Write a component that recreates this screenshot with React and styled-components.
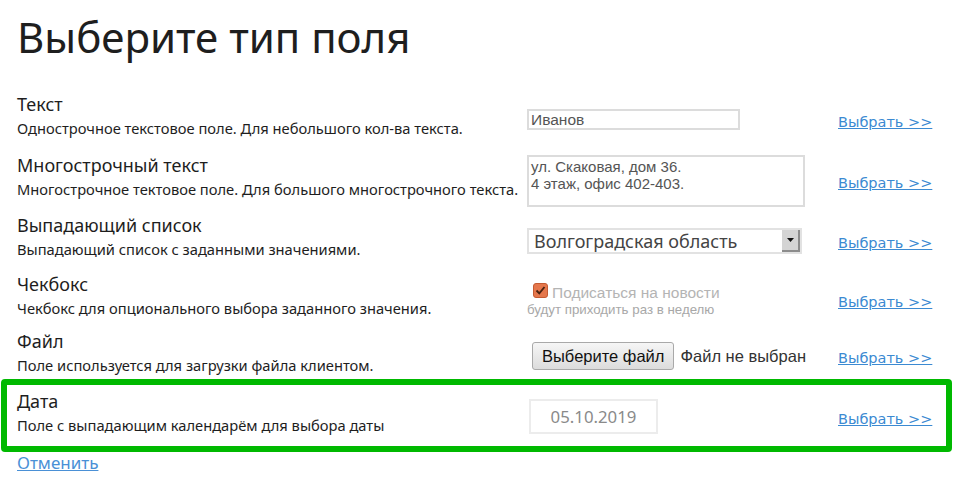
import React from 'react';
import styled, { createGlobalStyle } from 'styled-components';

const Global = createGlobalStyle`
  body {
    margin: 0;
    background: #fff;
    font-family: "Noto Sans", "Open Sans", sans-serif;
    color: #222;
  }
`;

const Page = styled.div`
  width: 963px;
  padding-top: 6px;
`;

const Title = styled.h1`
  margin: 0 0 17px 17px;
  font-size: 42px;
  font-weight: 400;
  line-height: 62px;
  color: #1e1e1e;
`;

const List = styled.div`
  display: flex;
  flex-direction: column;
  margin: 0 11px 0 1px;
`;

const Row = styled.div`
  display: grid;
  grid-template-columns: 510px 310px 1fr;
  align-items: center;
  min-height: ${(p) => p.$h || 58}px;
  padding: ${(p) => (p.$active ? '0 10px 6px' : '0 16px')};
  border: ${(p) => (p.$active ? '6px solid #00b900' : 'none')};
  border-radius: 4px;
`;

const Label = styled.div`
  display: flex;
  flex-direction: column;
`;

const Name = styled.div`
  font-size: 18px;
  line-height: 24px;
  color: #1e1e1e;
`;

const Desc = styled.div`
  margin-top: 1px;
  font-size: 14.7px;
  line-height: 22px;
  color: #1e1e1e;
`;

const Control = styled.div`
  display: flex;
  align-items: center;
  margin-top: 8px;
`;

const TextInput = styled.div`
  width: 205px;
  height: 17px;
  border: 2px solid #dcdcdc;
  padding: 0 2px;
  font-family: "Liberation Sans", Arial, sans-serif;
  font-size: 15.5px;
  line-height: 17px;
  color: #555;
`;

const TextArea = styled.div`
  width: 270px;
  height: 46px;
  border: 2px solid #dcdcdc;
  padding: 1px 2px;
  font-family: "Liberation Sans", Arial, sans-serif;
  font-size: 15px;
  line-height: 17px;
  color: #555;
  white-space: pre-line;
`;

const Select = styled.div`
  display: flex;
  align-items: center;
  justify-content: space-between;
  width: 266px;
  height: 22px;
  border: 2px solid #e2e2e2;
  padding-left: 5px;
  font-size: 18px;
  color: #444;
`;

const SelectArrow = styled.span`
  display: flex;
  align-items: center;
  justify-content: center;
  width: 18px;
  height: 22px;
  background: #d4d4d4;
  border-right: 2px solid #8c8c8c;
  border-bottom: 2px solid #8c8c8c;
  box-sizing: border-box;
`;

const Check = styled.div`
  display: flex;
  flex-direction: column;
  margin-top: 2px;
  font-family: "Liberation Sans", Arial, sans-serif;
  color: #b4b4b4;
`;

const CheckLine = styled.div`
  display: flex;
  align-items: center;
  gap: 4px;
  padding-left: 6px;
  font-size: 15.5px;
  line-height: 18px;
`;

const Box = styled.span`
  display: inline-flex;
  width: 15px;
  height: 15px;
  border-radius: 3px;
  background: #e5774c;
  border: 1px solid #c45a32;
  box-sizing: border-box;
  margin-top: -5px;
`;

const Hint = styled.div`
  font-size: 13.3px;
  line-height: 16px;
  color: #a8a8a8;
`;

const FileButton = styled.span`
  display: inline-block;
  margin-left: 5px;
  padding: 4px 9px 4px;
  border: 1px solid #a9a9a9;
  border-radius: 3px;
  background: linear-gradient(#f6f6f6, #dcdcdc);
  font-family: "Liberation Sans", Arial, sans-serif;
  font-size: 16.5px;
  line-height: 18px;
  color: #111;
`;

const FileText = styled.span`
  margin-left: 6px;
  font-family: "Liberation Sans", Arial, sans-serif;
  font-size: 16.5px;
  color: #333;
`;

const DateInput = styled.div`
  width: 125px;
  height: 31px;
  margin-left: 2px;
  border: 2px solid #ececec;
  text-align: center;
  font-size: 16.8px;
  line-height: 31px;
  color: #8a8a8a;
`;

const Link = styled.a`
  justify-self: start;
  margin-left: 1px;
  margin-top: 12px;
  font-family: "DejaVu Sans", Verdana, sans-serif;
  font-size: 14.5px;
  color: #3b8ad2;
  text-decoration: underline;
`;

const Cancel = styled.a`
  display: inline-block;
  margin: 0 0 0 17px;
  font-size: 17px;
  line-height: 20px;
  color: #4a90d6;
  text-decoration: underline;
`;

const rows = [
  {
    name: 'Текст',
    desc: 'Однострочное текстовое поле. Для небольшого кол-ва текста.',
    control: <TextInput>Иванов</TextInput>,
    h: 61,
  },
  {
    name: 'Многострочный текст',
    desc: 'Многострочное тектовое поле. Для большого многострочного текста.',
    control: <TextArea>{'ул. Скаковая, дом 36.\n4 этаж, офис 402-403.'}</TextArea>,
    h: 61,
  },
  {
    name: 'Выпадающий список',
    desc: 'Выпадающий список с заданными значениями.',
    control: (
      <Select>
        Волгоградская область
        <SelectArrow>
          <svg width="7" height="4" viewBox="0 0 7 4">
            <path d="M0 0h7L3.5 4z" fill="#111" />
          </svg>
        </SelectArrow>
      </Select>
    ),
    h: 59,
  },
  {
    name: 'Чекбокс',
    desc: 'Чекбокс для опционального выбора заданного значения.',
    control: (
      <Check>
        <CheckLine>
          <Box>
            <svg width="13" height="13" viewBox="0 0 13 13">
              <path d="M2.5 6.5l2.8 2.8L10.5 3" stroke="#4a2210" strokeWidth="1.9" fill="none" />
            </svg>
          </Box>
          Подисаться на новости
        </CheckLine>
        <Hint>будут приходить раз в неделю</Hint>
      </Check>
    ),
    h: 59,
  },
  {
    name: 'Файл',
    desc: 'Поле используется для загрузки файла клиентом.',
    control: (
      <>
        <FileButton>Выберите файл</FileButton>
        <FileText>Файл не выбран</FileText>
      </>
    ),
    h: 54,
  },
];

export default function App() {
  return (
    <Page>
      <Global />
      <Title>Выберите тип поля</Title>
      <List>
        {rows.map((r) => (
          <Row key={r.name} $h={r.h}>
            <Label>
              <Name>{r.name}</Name>
              <Desc>{r.desc}</Desc>
            </Label>
            <Control>{r.control}</Control>
            <Link href="#">Выбрать &gt;&gt;</Link>
          </Row>
        ))}
        <Row $active $h={55}>
          <Label>
            <Name>Дата</Name>
            <Desc>Поле с выпадающим календарём для выбора даты</Desc>
          </Label>
          <Control>
            <DateInput>05.10.2019</DateInput>
          </Control>
          <Link href="#">Выбрать &gt;&gt;</Link>
        </Row>
      </List>
      <Cancel href="#">Отменить</Cancel>
    </Page>
  );
}
